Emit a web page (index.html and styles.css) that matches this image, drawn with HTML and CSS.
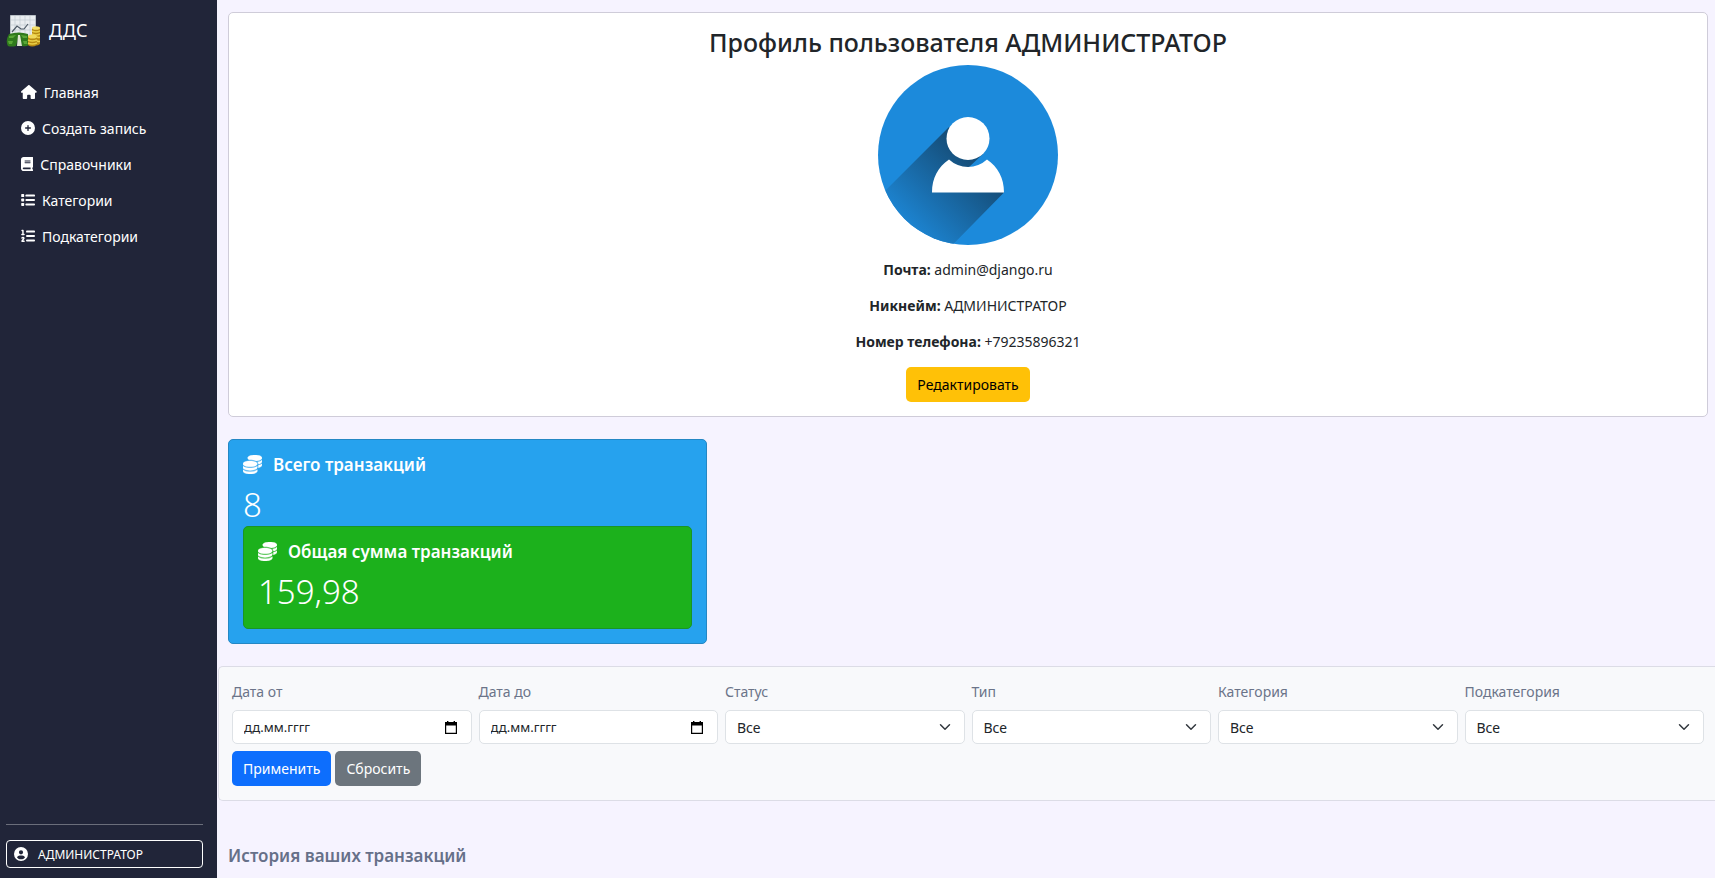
FILE: index.html
```html
<!DOCTYPE html>
<html lang="ru">
<head>
<meta charset="utf-8">
<meta name="viewport" content="width=device-width, initial-scale=1">
<title>ДДС</title>
<link rel="stylesheet" href="styles.css">
</head>
<body>
<svg class="defs" aria-hidden="true">
  <symbol id="coins" viewBox="0 0 512 512"><path stroke="currentColor" stroke-width="12" d="M512 80c0 18-14.3 34.6-38.4 48c-29.1 16.1-72.5 27.5-122.3 30.9c-3.7-1.8-7.4-3.5-11.3-5C300.6 137.4 248.2 128 192 128c-8.3 0-16.4 .2-24.5 .6l-1.1-.6C142.3 114.6 128 98 128 80c0-44.2 86-80 192-80S512 35.8 512 80zM160.7 161.1c10.2-.7 20.7-1.1 31.3-1.1c62.2 0 117.4 12.3 152.5 31.4C369.3 204.9 384 221.7 384 240c0 4-.7 7.9-2.1 11.7c-4.6 13.2-17 25.3-35 35.5c-.5 .3-.9 .5-1.3 .7c-35 19.4-90.8 32-153.6 32c-59.6 0-112.9-11.3-148.2-29.1c-1.9-.9-3.7-1.9-5.5-2.9C14.3 274.6 0 258 0 240c0-34.8 53.4-64.5 128-75.4c10.5-1.5 21.4-2.7 32.7-3.5zM416 240c0-21.9-10.6-39.9-24.1-53.4c28.3-4.4 54.2-11.4 76.2-20.5c16.3-6.8 31.5-15.2 43.9-25.5V176c0 19.3-16.5 37.1-43.8 50.9c-14.6 7.4-32.4 13.7-52.4 18.5c.1-1.8 .2-3.5 .2-5.3zm-32 96c0 18-14.3 34.6-38.4 48c-1.8 1-3.6 1.9-5.5 2.9C304.9 404.7 251.6 416 192 416c-62.8 0-118.6-12.6-153.6-32C14.3 370.6 0 354 0 336V300.6c12.5 10.3 27.6 18.7 43.9 25.5C83.4 342.6 135.8 352 192 352s108.6-9.4 148.1-25.9c7.8-3.2 15.3-6.9 22.4-10.9c6.1-3.4 11.8-7.2 17.2-11.2c1.5-1.1 2.9-2.3 4.3-3.4V336zm32 0V278.1c19-4.2 36.5-9.5 52.1-16c16.3-6.8 31.5-15.2 43.9-25.5V272c0 10.5-5 21-14.9 30.9c-16.3 16.3-45 29.7-81.3 38.4c.1-1.7 .2-3.5 .2-5.3zM192 448c56.2 0 108.6-9.4 148.1-25.9c16.3-6.8 31.5-15.2 43.9-25.5V432c0 44.2-86 80-192 80S0 476.2 0 432V396.6c12.5 10.3 27.6 18.7 43.9 25.5C83.4 438.6 135.8 448 192 448z"/></symbol>
  <symbol id="calendar" viewBox="0 0 12 13"><path fill-rule="evenodd" d="M2 0h1.4v1h5.2V0H10v1h2v12H0V1h2zM1.2 4.4v7.4h9.6V4.4z"/></symbol>
</svg>
<div class="layout">
  <aside class="sidebar">
    <a class="brand" href="#">
      <svg class="brand-logo" viewBox="0 0 34 34" aria-hidden="true">
        <path fill="#e9edf0" stroke="#b9c0c6" d="M4.500 1.500h25v22h-25z"/>
        <path fill="none" stroke="#c3cbd1" stroke-width=".7" d="M9 2v21M14 2v21M19 2v21M24 2v21M5 6h24M5 11h24M5 16h24"/>
        <path fill="none" stroke="#4d5a66" stroke-width="1.200" d="M6 18l5-6 4 3 3 0 4-5"/>
        <path fill="#2f7a1c" d="M3 20q10-3 19 0l1 11q-3 2-7 1l-2-7h-2l-2 7q-5 1-8 0-3-5 1-12z"/>
        <path fill="#59a736" d="M3 22l7-1-3 3H3zM15 21l6 1v2l-4 0zM2 27l5 0-1 3-3 0zM17 27l4 0 0 3-3 0z"/>
        <path fill="#dfe8d2" d="M12 21h2l2 11h-5z"/>
        <path fill="#b68a12" d="M26 14h8v16q-4 3-8 0zM22 22h9v9q-5 3-9 0z"/>
        <path fill="none" stroke="#e9cf46" stroke-width="1.500" d="M26 17q4 2 8 0M26 20q4 2 8 0M31 23q2 1 3 0M31 27q2 1 3 0M22 26q4 2 9 0M22 29q4 2 9 0"/>
        <ellipse cx="30" cy="14" rx="4" ry="1.800" fill="#f3df6b"/><ellipse cx="26.500" cy="22.500" rx="4.500" ry="2" fill="#f0d95c"/>
      </svg>
      <span>ДДС</span>
    </a>
    <nav class="nav">
      <a href="#"><svg class="icon" viewBox="0 0 576 512" aria-hidden="true"><path d="M575.800 255.500c0 18-15 32.100-32 32.100h-32l.7 160.200c0 2.700-.2 5.400-.5 8.100V472c0 22.100-17.900 40-40 40H392c-22.100 0-40-17.900-40-40V384c0-17.700-14.300-32-32-32H256c-17.700 0-32 14.300-32 32v88c0 22.100-17.900 40-40 40H104c-22.100 0-40-17.900-40-40V287.600H32c-18 0-32-14-32-32.100c0-9 3-17 10-24L266.400 8c7-7 15-8 22-8s15 2 21 7L564.800 231.500c8 7 12 15 11 24z"/></svg><span>Главная</span></a>
      <a href="#"><svg class="icon" viewBox="0 0 512 512" aria-hidden="true"><path fill-rule="evenodd" d="M256 512A256 256 0 1 0 256 0a256 256 0 1 0 0 512zM232 344V280H168c-13.300 0-24-10.700-24-24s10.700-24 24-24h64V168c0-13.300 10.700-24 24-24s24 10.700 24 24v64h64c13.300 0 24 10.700 24 24s-10.700 24-24 24H280v64c0 13.300-10.700 24-24 24s-24-10.700-24-24z"/></svg><span>Создать запись</span></a>
      <a href="#"><svg class="icon" viewBox="0 0 448 512" aria-hidden="true"><path fill-rule="evenodd" d="M96 0C43 0 0 43 0 96V416c0 53 43 96 96 96H416c17.700 0 32-14.300 32-32s-14.300-32-32-32V384c17.700 0 32-14.300 32-32V32c0-17.700-14.300-32-32-32H96zm0 384H352v64H96c-17.700 0-32-14.300-32-32s14.300-32 32-32zm32-240c0-8.800 7.200-16 16-16H336c8.800 0 16 7.200 16 16s-7.200 16-16 16H144c-8.800 0-16-7.200-16-16zm16 48H336c8.800 0 16 7.200 16 16s-7.200 16-16 16H144c-8.800 0-16-7.200-16-16s7.200-16 16-16z"/></svg><span>Справочники</span></a>
      <a href="#"><svg class="icon" viewBox="0 0 512 512" aria-hidden="true"><rect x="8" y="40" width="108" height="108" rx="24"/><rect x="8" y="202" width="108" height="108" rx="24"/><rect x="8" y="364" width="108" height="108" rx="24"/><rect x="160" y="58" width="352" height="72" rx="32"/><rect x="160" y="220" width="352" height="72" rx="32"/><rect x="160" y="382" width="352" height="72" rx="32"/></svg><span>Категории</span></a>
      <a href="#"><svg class="icon" viewBox="0 0 512 512" aria-hidden="true"><path fill="none" stroke="currentColor" stroke-width="52" stroke-linecap="round" stroke-linejoin="round" d="M38 56h34v144M32 200h80M34 328c24-28 72-24 72 8 0 30-50 56-72 110h80"/><rect x="184" y="58" width="328" height="72" rx="32"/><rect x="184" y="220" width="328" height="72" rx="32"/><rect x="184" y="382" width="328" height="72" rx="32"/></svg><span>Подкатегории</span></a>
    </nav>
    <div class="sidebar-foot">
      <button class="user-button" type="button">
        <svg class="icon" viewBox="0 0 14 14" aria-hidden="true"><path fill-rule="evenodd" d="M7 0a7 7 0 1 0 0 14A7 7 0 0 0 7 0zM7 3.200a2.100 2.100 0 1 1 0 4.200 2.100 2.100 0 0 1 0-4.200zM3 10.400C3.400 9.100 4.500 8.400 5.800 8.400h2.400c1.300 0 2.400 .7 2.800 2C10 11.600 8.600 12.300 7 12.300S4 11.600 3 10.400z"/></svg>
        <span>АДМИНИСТРАТОР</span>
      </button>
    </div>
  </aside>
  <main class="content">
    <section class="card profile">
      <h1>Профиль пользователя АДМИНИСТРАТОР</h1>
      <svg class="avatar" viewBox="0 0 180 180" role="img" aria-label="Аватар">
        <defs>
          <clipPath id="disc"><circle cx="90" cy="90" r="90"/></clipPath>
          <linearGradient id="shade" gradientUnits="userSpaceOnUse" x1="98" y1="95" x2="34" y2="159">
            <stop offset="0" stop-color="#154c76"/><stop offset="1" stop-color="#1c82ce"/>
          </linearGradient>
        </defs>
        <circle cx="90" cy="90" r="90" fill="#1c8adb"/>
        <path clip-path="url(#disc)" fill="url(#shade)" d="M71 62L-10 143 40 215 126 127.500 90 103 105 89z"/>
        <path fill="#fff" d="M54 127.500C54 113 60 102 71 94.500A28 28 0 0 0 109 94.500C120 102 126 113 126 127.500z"/>
        <circle cx="90" cy="73.500" r="21.500" fill="#fff"/>
      </svg>
      <p><strong>Почта:</strong> admin@django.ru</p>
      <p><strong>Никнейм:</strong> АДМИНИСТРАТОР</p>
      <p><strong>Номер телефона:</strong> +79235896321</p>
      <button class="btn btn-warning" type="button">Редактировать</button>
    </section>

    <section class="card stat stat-blue">
      <h2><svg class="stat-icon" aria-hidden="true"><use href="#coins"/></svg>Всего транзакций</h2>
      <div class="stat-value">8</div>
      <div class="card stat stat-green">
        <h2><svg class="stat-icon" aria-hidden="true"><use href="#coins"/></svg>Общая сумма транзакций</h2>
        <div class="stat-value">159,98</div>
      </div>
    </section>

    <form class="filter">
      <div class="fields">
        <div class="field"><label for="from">Дата от</label><div class="control date"><input id="from" type="text" placeholder="дд.мм.гггг"><svg aria-hidden="true"><use href="#calendar"/></svg></div></div>
        <div class="field"><label for="to">Дата до</label><div class="control date"><input id="to" type="text" placeholder="дд.мм.гггг"><svg aria-hidden="true"><use href="#calendar"/></svg></div></div>
        <div class="field"><label for="status">Статус</label><select class="control" id="status"><option>Все</option></select></div>
        <div class="field"><label for="type">Тип</label><select class="control" id="type"><option>Все</option></select></div>
        <div class="field"><label for="category">Категория</label><select class="control" id="category"><option>Все</option></select></div>
        <div class="field"><label for="subcategory">Подкатегория</label><select class="control" id="subcategory"><option>Все</option></select></div>
      </div>
      <div class="actions">
        <button class="btn btn-primary" type="submit">Применить</button>
        <button class="btn btn-secondary" type="reset">Сбросить</button>
      </div>
    </form>

    <h2 class="history">История ваших транзакций</h2>
  </main>
</div>
</body>
</html>
```
FILE: styles.css
```css
* { box-sizing: border-box; }

body {
  margin: 0;
  background: #f6f3ff;
  color: #212529;
  font: 14px/21px "Noto Sans", "Open Sans", sans-serif;
}

h1, h2, p { margin: 0; }
button, input, select { font: inherit; }

.defs { position: absolute; width: 0; height: 0; }

.layout { display: flex; height: 100vh; overflow: hidden; }

.sidebar {
  display: flex;
  flex-direction: column;
  flex: 0 0 217px;
  padding: 12px 14px 10px 6px;
  background: #212539;
  color: #fff;
}

.brand {
  display: flex;
  align-items: center;
  gap: 9px;
  height: 37px;
  color: #fff;
  font-size: 18px;
  text-decoration: none;
}
.brand-logo { width: 34px; height: 34px; }

.nav { display: flex; flex-direction: column; margin-top: 25px; }
.nav a {
  display: flex;
  align-items: center;
  gap: 7px;
  height: 36px;
  padding-left: 15px;
  color: #fff;
  text-decoration: none;
}

.icon { height: 14px; fill: currentColor; }

.sidebar-foot {
  margin-top: auto;
  padding-top: 15px;
  border-top: 1px solid #6b6e7b;
}
.user-button {
  display: flex;
  align-items: center;
  gap: 10px;
  width: 100%;
  height: 28px;
  padding: 0 7px;
  border: 1px solid #fff;
  border-radius: 4px;
  background: transparent;
  color: #fff;
  font-size: 12px;
}

.content {
  flex: 1;
  min-width: 0;
  padding: 12px 0 0 1px;
  overflow: hidden;
}

.card { border: 1px solid #cfccd9; border-radius: 5px; }

.profile {
  display: flex;
  flex-direction: column;
  align-items: center;
  margin: 0 7px 0 10px;
  padding: 14px;
  background: #fff;
}
.profile h1 {
  margin-bottom: 7px;
  font-size: 25px;
  font-weight: 500;
  line-height: 31px;
}
.avatar { width: 180px; height: 180px; margin-bottom: 14px; }
.profile p { margin-bottom: 15px; }

.btn {
  height: 35px;
  padding: 0 11px;
  border: 0;
  border-radius: 5px;
  color: #fff;
}
.btn-warning { background: #ffc107; color: #000; }
.btn-primary { background: #0d6efd; }
.btn-secondary { background: #6c757d; }

.stat { padding: 14px; color: #fff; }
.stat-blue {
  width: 32%;
  margin: 22px 0 0 10px;
  background: #26a2ee;
  border-color: #2487c4;
}
.stat-green { padding-bottom: 15px; background: #1cb11c; border-color: #1a9526; }
.stat h2 {
  display: flex;
  align-items: center;
  gap: 11px;
  margin-bottom: 9px;
  font-size: 17px;
  font-weight: 600;
  line-height: 21px;
}
.stat-icon { width: 19px; height: 19px; fill: currentColor; }
.stat-value {
  font-size: 33px;
  font-weight: 300;
  line-height: 42px;
}

.filter {
  margin-top: 22px;
  padding: 14px 11px 14px 13px;
  border: 1px solid #dcdce6;
  border-right: 0;
  border-radius: 5px 0 0 5px;
  background: #f8f9fb;
}
.fields {
  display: grid;
  grid-template-columns: repeat(6, 1fr);
  gap: 7px;
}
.field label { display: block; margin-bottom: 8px; color: #6b7489; }
.control {
  width: 100%;
  height: 34px;
  padding: 0 11px;
  border: 1px solid #dee2e6;
  border-radius: 5px;
  background: #fff;
  color: #212529;
}
select.control {
  appearance: none;
  background: #fff url("data:image/svg+xml,%3Csvg xmlns='http://www.w3.org/2000/svg' viewBox='0 0 16 16'%3E%3Cpath fill='none' stroke='%23343a40' stroke-linecap='round' stroke-linejoin='round' stroke-width='2' d='m2 5 6 6 6-6'/%3E%3C/svg%3E") no-repeat right 13px center / 12px 12px;
}
.date { display: flex; align-items: center; padding-right: 14px; }
.date input {
  flex: 1;
  min-width: 0;
  padding: 0;
  border: 0;
  outline: 0;
  background: transparent;
  font-size: 13px;
}
.date input::placeholder { color: #212529; opacity: 1; }
.date svg { width: 12px; height: 13px; }

.actions { display: flex; gap: 4px; margin-top: 7px; }

.history {
  margin: 44px 0 0 10px;
  color: #667089;
  font-size: 17px;
  font-weight: 600;
  line-height: 21px;
}
```
